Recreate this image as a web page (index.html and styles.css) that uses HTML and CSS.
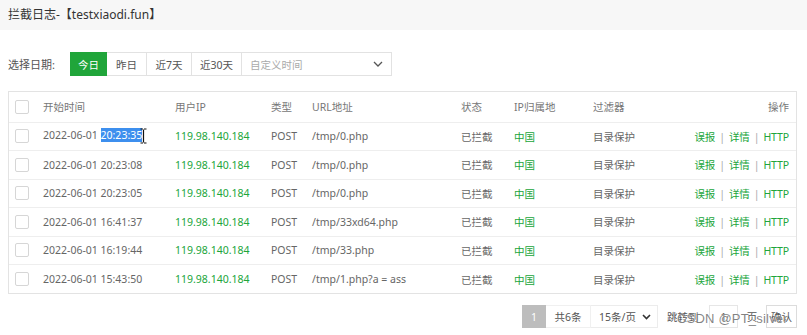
FILE: index.html
```html
<!DOCTYPE html>
<html>
<head>
    <meta charset="utf-8">
    <title>拦截日志</title>
    <link rel="stylesheet" href="styles.css">
</head>
<body>

<div id="main">
    <!--title bar-->
    <div class="title">拦截日志-【testxiaodi.fun】</div>

    <!--date filter-->
    <div class="filter">
        <span class="label">选择日期:</span>
        <div class="dates">
            <span class="date on">今日</span>
            <span class="date">昨日</span>
            <span class="date">近7天</span>
            <span class="date">近30天</span>
            <span class="date custom">自定义时间
                <svg class="arrow" width="10" height="6" viewBox="0 0 10 6"><path d="M1 1l4 4 4-4" fill="none" stroke="#555" stroke-width="1.3"/></svg>
            </span>
        </div>
    </div>

    <!--log table-->
    <div class="tbox">
        <table class="log">
            <colgroup>
                <col class="c-chk"><col class="c-time"><col class="c-ip"><col class="c-type"><col class="c-url">
                <col class="c-state"><col class="c-area"><col class="c-filter"><col>
            </colgroup>
            <thead>
            <tr>
                <th><span class="chk"></span></th>
                <th>开始时间</th>
                <th>用户IP</th>
                <th>类型</th>
                <th>URL地址</th>
                <th>状态</th>
                <th>IP归属地</th>
                <th>过滤器</th>
                <th class="r">操作</th>
            </tr>
            </thead>
            <tbody>
            <tr>
                <td><span class="chk"></span></td>
                <td>2022-06-01 <span class="sel">20:23:35</span><svg class="ibeam" width="7" height="16" viewBox="0 0 7 16"><path d="M0.5 1h2.5M4 1h2.5M3.5 1.5v13M0.5 15h2.5M4 15h2.5" fill="none" stroke="#111" stroke-width="1.2"/></svg></td>
                <td class="g">119.98.140.184</td>
                <td>POST</td>
                <td>/tmp/0.php</td>
                <td>已拦截</td>
                <td class="g">中国</td>
                <td>目录保护</td>
                <td class="r ops"><a>误报</a><i>|</i><a>详情</a><i>|</i><a>HTTP</a></td>
            </tr>
            <tr>
                <td><span class="chk"></span></td>
                <td>2022-06-01 20:23:08</td>
                <td class="g">119.98.140.184</td>
                <td>POST</td>
                <td>/tmp/0.php</td>
                <td>已拦截</td>
                <td class="g">中国</td>
                <td>目录保护</td>
                <td class="r ops"><a>误报</a><i>|</i><a>详情</a><i>|</i><a>HTTP</a></td>
            </tr>
            <tr>
                <td><span class="chk"></span></td>
                <td>2022-06-01 20:23:05</td>
                <td class="g">119.98.140.184</td>
                <td>POST</td>
                <td>/tmp/0.php</td>
                <td>已拦截</td>
                <td class="g">中国</td>
                <td>目录保护</td>
                <td class="r ops"><a>误报</a><i>|</i><a>详情</a><i>|</i><a>HTTP</a></td>
            </tr>
            <tr>
                <td><span class="chk"></span></td>
                <td>2022-06-01 16:41:37</td>
                <td class="g">119.98.140.184</td>
                <td>POST</td>
                <td>/tmp/33xd64.php</td>
                <td>已拦截</td>
                <td class="g">中国</td>
                <td>目录保护</td>
                <td class="r ops"><a>误报</a><i>|</i><a>详情</a><i>|</i><a>HTTP</a></td>
            </tr>
            <tr>
                <td><span class="chk"></span></td>
                <td>2022-06-01 16:19:44</td>
                <td class="g">119.98.140.184</td>
                <td>POST</td>
                <td>/tmp/33.php</td>
                <td>已拦截</td>
                <td class="g">中国</td>
                <td>目录保护</td>
                <td class="r ops"><a>误报</a><i>|</i><a>详情</a><i>|</i><a>HTTP</a></td>
            </tr>
            <tr>
                <td><span class="chk"></span></td>
                <td>2022-06-01 15:43:50</td>
                <td class="g">119.98.140.184</td>
                <td>POST</td>
                <td>/tmp/1.php?a = ass</td>
                <td>已拦截</td>
                <td class="g">中国</td>
                <td>目录保护</td>
                <td class="r ops"><a>误报</a><i>|</i><a>详情</a><i>|</i><a>HTTP</a></td>
            </tr>
            </tbody>
        </table>
    </div>

    <!--pager-->
    <div class="pager">
        <span class="cur">1</span>
        <span class="total">共6条</span>
        <span class="size">15条/页
            <svg width="9" height="6" viewBox="0 0 9 6"><path d="M1 1l3.5 3.5L8 1" fill="none" stroke="#333" stroke-width="1.6"/></svg>
        </span>
        <span class="jump">跳转到</span>
        <span class="num">1</span>
        <span class="unit">页</span>
        <span class="ok">确认</span>
        <span class="mark">CSDN @PT_silver</span>
    </div>
</div>

</body>
</html>
```

FILE: styles.css
```css
*{ margin: 0; padding: 0; box-sizing: border-box; }
body{ background: #fff; font-family: "Noto Sans", "Noto Sans CJK SC", sans-serif; font-size: 10.5px; color: #666; }

#main{ width: 807px; height: 335px; overflow: hidden; }

/*title bar*/
.title{ height: 30px; line-height: 29px; padding-left: 8px; background: #f7f7f7; font-size: 12px; color: #333; }

/*date filter*/
.filter{ display: flex; align-items: center; margin: 22px 0 0 8px; height: 24px; }
.filter .label{ width: 62px; font-size: 11px; color: #555; }
.dates{ display: flex; height: 24px; }
.date{ display: flex; align-items: center; justify-content: center; height: 24px; border: 1px solid #e2e2e2; border-left: none; font-size: 10.5px; color: #555; }
.date:nth-child(1){ width: 37px; border: 1px solid #20a53a; background: #20a53a; color: #fff; }
.date:nth-child(2){ width: 40px; }
.date:nth-child(3){ width: 45px; }
.date:nth-child(4){ width: 50px; }
.date.custom{ width: 150px; justify-content: space-between; padding: 0 8px 0 8px; color: #aaa; }

/*table*/
.tbox{ margin: 15px 10px 0 8px; border: 1px solid #e3e3e3; }
.log{ width: 100%; border-collapse: collapse; table-layout: fixed; }
.log th, .log td{ height: 28.5px; padding: 0 0 0 8px; text-align: left; font-weight: normal; white-space: nowrap; border-top: 1px solid #eee; vertical-align: middle; }
.log thead th{ border-top: none; height: 30px; color: #777; }
.log .r{ text-align: right; padding: 0 7px 0 0; }
.log .g{ color: #20a53a; }
.c-chk{ width: 26px; }
.c-time{ width: 132px; }
.c-ip{ width: 96px; }
.c-type{ width: 41px; }
.c-url{ width: 149px; }
.c-state{ width: 53px; }
.c-area{ width: 79px; }
.c-filter{ width: 95px; }

.chk{ display: block; width: 14px; height: 14px; margin-left: -2px; border: 1px solid #d6d6d6; border-radius: 2px; background: #fff; }

.sel{ background: #3d8fee; color: #fff; }
.ibeam{ vertical-align: middle; margin-left: -2px; }

.ops{ letter-spacing: -0.1px; }
.ops a{ color: #20a53a; }
.ops i{ font-style: normal; color: #aaa; margin: 0 4px; }

/*pager*/
.pager{ position: relative; display: flex; align-items: center; margin: 11px 0 0 522px; height: 23px; font-size: 10.5px; color: #555; }
.pager span{ display: flex; align-items: center; height: 23px; }
.pager .cur{ width: 24px; justify-content: center; background: #bdbdbd; color: #fff; }
.pager .total{ width: 45px; justify-content: center; border: 1px solid #f0f0f0; border-left: none; }
.pager .size{ width: 67px; justify-content: space-between; padding: 0 6px 0 8px; border: 1px solid #ececec; border-left: none; }
.pager .jump{ margin-left: 9px; width: 42px; }
.pager .num{ width: 29px; justify-content: center; border: 1px solid #e6e6e6; }
.pager .unit{ width: 28px; justify-content: center; }
.pager .ok{ width: 31px; justify-content: center; border: 1px solid #dcdcdc; }

/*watermark*/
.pager .mark{ position: absolute; left: 155px; top: 6px; height: auto; font: 13px "Liberation Sans", sans-serif; color: rgba(90, 90, 90, 0.75); letter-spacing: 0.2px; text-shadow: 0 0 1px #fff; }
```
